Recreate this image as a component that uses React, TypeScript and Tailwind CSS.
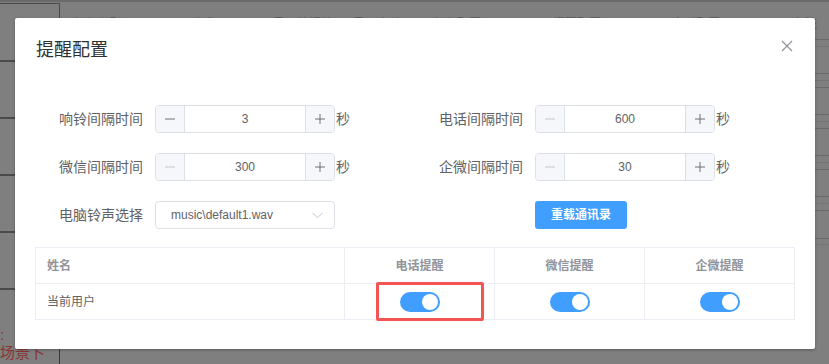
import React from 'react';

const font = "font-['Liberation_Sans','Noto_Sans_CJK_SC',sans-serif]";

const headCols = [
  { x: 73, t: '任务类型' },
  { x: 193, t: '名称' },
  { x: 273, t: '是否监视端口' },
  { x: 353, t: '是否启动' },
  { x: 433, t: '任务配置' },
  { x: 553, t: '提醒配置' },
  { x: 672, t: '定时配置' },
  { x: 793, t: '备注' },
];

// row lines peeking out on the right edge
const rightLines = [
  { h: 38, dark: true },
  { h: 7, dark: false },
  { h: 27, dark: true },
  { h: 7, dark: false },
  { h: 7, dark: true },
  { h: 27, dark: true },
  { h: 7, dark: false },
  { h: 7, dark: true },
  { h: 27, dark: true },
  { h: 7, dark: false },
  { h: 7, dark: true },
  { h: 27, dark: true },
  { h: 7, dark: false },
  { h: 7, dark: true },
  { h: 28, dark: true },
  { h: 6, dark: false },
];

function Background() {
  return (
    <div className="h-full w-full bg-[#7f7f7f] border-t-2 border-[#6a6a6a]">
      <div className="flex h-full">
        <div className="w-[60px] flex flex-col">
          <div className="h-[57px] mt-[1px] border-t border-r border-[#4a4a4a]" />
          <div className="h-[57px] border-t-2 border-[#4a4a4a]" />
          <div className="h-[57px] border-t-2 border-[#4a4a4a]" />
          <div className="h-[57px] border-t-2 border-[#4a4a4a]" />
          <div className="h-[57px] border-t-2 border-[#4a4a4a]" />
          <div className="flex-1 border-t-2 border-[#4a4a4a] border-r border-r-[#3a3a3a] pt-[36px] text-[15px] leading-[18px] text-[#8a3434]">
            <div>:</div>
            <div className="whitespace-nowrap">场景卜</div>
          </div>
        </div>
        <div className="flex-1 min-w-0">
          <div className="flex pt-[13px] text-[12px] text-[#5c5c5c]">
            {headCols.map((c, i) => (
              <span
                key={c.t}
                className="whitespace-nowrap shrink-0"
                style={{ marginLeft: i === 0 ? c.x - 60 : c.x - headCols[i - 1].x - headCols[i - 1].t.length * 12 }}
              >
                {c.t}
              </span>
            ))}
          </div>
        </div>
        <div className="w-[14px] flex flex-col">
          {rightLines.map((l, i) => (
            <div
              key={i}
              className={l.dark ? 'border-b border-[#6a6a6a]' : 'border-b border-[#747474]'}
              style={{ height: l.h }}
            />
          ))}
        </div>
      </div>
    </div>
  );
}

function NumberInput({ value, minusActive }: { value: string; minusActive?: boolean }) {
  return (
    <div className="flex items-center">
      <div className="flex w-[180px] h-[28px] border border-[#dcdfe6] rounded-[4px] overflow-hidden">
        <div className="w-[29px] bg-[#f5f7fa] border-r border-[#dcdfe6] flex items-center justify-center">
          <svg width="10" height="2" viewBox="0 0 10 2">
            <path d="M0 1H10" stroke={minusActive ? '#606266' : '#c0c4cc'} strokeWidth="0.9" />
          </svg>
        </div>
        <div className="flex-1 flex items-center justify-center text-[12px] text-[#606266]">{value}</div>
        <div className="w-[29px] bg-[#f5f7fa] border-l border-[#dcdfe6] flex items-center justify-center">
          <svg width="10" height="10" viewBox="0 0 10 10">
            <path d="M0 5H10M5 0V10" stroke="#606266" strokeWidth="0.9" />
          </svg>
        </div>
      </div>
      <span className="ml-[1px] text-[14px] text-[#606266]">秒</span>
    </div>
  );
}

function FormItem({ label, children }: { label: string; children: React.ReactNode }) {
  return (
    <div className="flex items-center h-[28px]">
      <div className="w-[120px] pr-[12px] text-right text-[14px] text-[#606266]">{label}</div>
      {children}
    </div>
  );
}

function Switch() {
  return (
    <div className="w-[40px] h-[20px] rounded-full bg-[#409eff] flex items-center justify-end px-[2px]">
      <div className="w-[16px] h-[16px] rounded-full bg-white" />
    </div>
  );
}

export default function App() {
  return (
    <div className={`relative w-[829px] h-[364px] overflow-hidden ${font}`}>
      <Background />
      <div className="absolute inset-0 pl-[15px] pt-[18px]">
        <div className="w-[800px] h-[331px] bg-white rounded-[2px] shadow-[0_1px_3px_rgba(0,0,0,0.3)]">
          <div className="flex items-start justify-between pt-[20px] pl-[21px] pr-[22px]">
            <span className="text-[18px] leading-[24px] text-[#303133]">提醒配置</span>
            <svg width="12" height="12" viewBox="0 0 12 12" className="mt-[2px]">
              <path d="M1 1L11 11M11 1L1 11" stroke="#909399" strokeWidth="1.2" />
            </svg>
          </div>
          <div className="px-[20px] pt-[43px]">
            <div className="grid grid-cols-2 gap-y-[20px]">
              <FormItem label="响铃间隔时间">
                <NumberInput value="3" minusActive />
              </FormItem>
              <FormItem label="电话间隔时间">
                <NumberInput value="600" />
              </FormItem>
              <FormItem label="微信间隔时间">
                <NumberInput value="300" />
              </FormItem>
              <FormItem label="企微间隔时间">
                <NumberInput value="30" />
              </FormItem>
              <FormItem label="电脑铃声选择">
                <div className="w-[180px] h-[28px] border border-[#dcdfe6] rounded-[4px] flex items-center justify-between pl-[15px] pr-[11px]">
                  <span className="text-[12px] text-[#606266]">music\default1.wav</span>
                  <svg width="11" height="7" viewBox="0 0 11 7">
                    <path d="M0.5 0.8L5.5 5.8L10.5 0.8" fill="none" stroke="#c0c4cc" strokeWidth="1" />
                  </svg>
                </div>
              </FormItem>
              <div className="flex items-center h-[28px] pl-[120px]">
                <button className="w-[92px] h-[28px] rounded-[3px] bg-[#409eff] text-white text-[12px] font-bold">
                  重载通讯录
                </button>
              </div>
            </div>
            <div className="relative mt-[18px] border border-[#ebeef5] text-[12px]">
              <div className="flex h-[36px] border-b border-[#ebeef5] font-bold text-[#909399]">
                <div className="w-[309px] pl-[11px] flex items-center border-r border-[#ebeef5]">姓名</div>
                <div className="w-[150px] flex items-center justify-center border-r border-[#ebeef5]">电话提醒</div>
                <div className="w-[150px] flex items-center justify-center border-r border-[#ebeef5]">微信提醒</div>
                <div className="flex-1 flex items-center justify-center">企微提醒</div>
              </div>
              <div className="flex h-[35px] text-[#606266]">
                <div className="w-[309px] pl-[11px] flex items-center border-r border-[#ebeef5]">当前用户</div>
                <div className="w-[150px] flex items-center justify-center border-r border-[#ebeef5]">
                  <Switch />
                </div>
                <div className="w-[150px] flex items-center justify-center border-r border-[#ebeef5]">
                  <Switch />
                </div>
                <div className="flex-1 flex items-center justify-center">
                  <Switch />
                </div>
              </div>
              <div className="absolute left-[340px] top-[34px] w-[108px] h-[39px] border-[3px] border-[#f45454] rounded-[2px]" />
            </div>
          </div>
        </div>
      </div>
    </div>
  );
}
